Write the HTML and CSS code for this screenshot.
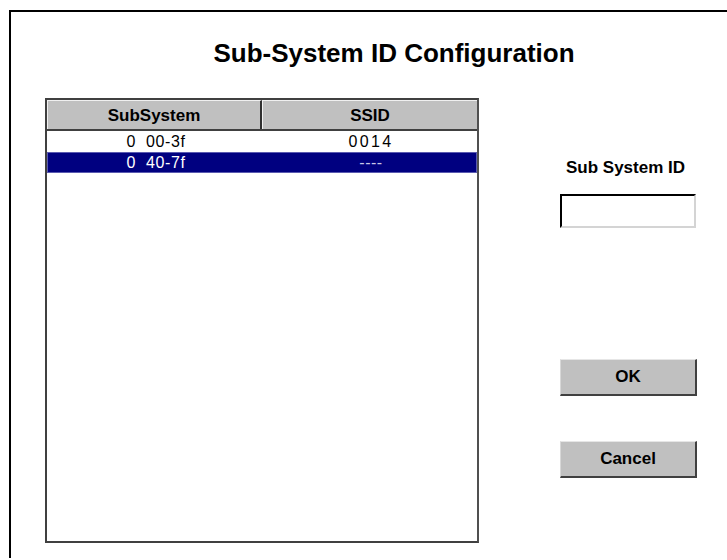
FILE: index.html
```html
<!DOCTYPE html>
<html>
<head>
<meta charset="utf-8">
<link rel="stylesheet" href="styles.css">
</head>
<body>
<div class="frame">
  <h1 class="title">Sub-System ID Configuration</h1>
  <div class="main">
    <div class="list">
      <div class="head">
        <div class="hcell c1">SubSystem</div>
        <div class="hcell c2">SSID</div>
      </div>
      <div class="row">
        <div class="cell c1">0  00-3f</div>
        <div class="cell c2 num">0014</div>
      </div>
      <div class="row sel">
        <div class="cell c1">0  40-7f</div>
        <div class="cell c2 num dash">----</div>
      </div>
    </div>
    <div class="side">
      <div class="label">Sub System ID</div>
      <input class="field" type="text">
      <button class="btn ok">OK</button>
      <button class="btn cancel">Cancel</button>
    </div>
  </div>
</div>
</body>
</html>
```

FILE: styles.css
```css
html, body {
  margin: 0;
  padding: 0;
  background: #fff;
  font-family: "Liberation Sans", Arial, sans-serif;
  color: #000;
}
.frame {
  margin: 10px 0 0 9px;
  border-top: 2px solid #000;
  border-left: 2px solid #000;
  height: 548px;
  box-sizing: border-box;
}
.title {
  margin: 26px 0 0 0;
  padding-left: 50px;
  font-size: 26px;
  line-height: 30px;
  font-weight: bold;
  text-align: center;
}
.main {
  display: flex;
  margin-top: 30px;
  padding-left: 34px;
}
.list {
  width: 434px;
  height: 445px;
  box-sizing: border-box;
  border: 2px solid #404040;
  border-right-color: #505050;
  background: #fff;
  display: flex;
  flex-direction: column;
}
.head {
  display: flex;
  height: 31px;
  box-sizing: border-box;
  border-bottom: 2px solid #404040;
}
.hcell {
  background: #c0c0c0;
  border-top: 1px solid #f0f0f0;
  border-left: 1px solid #f0f0f0;
  font-weight: bold;
  font-size: 17px;
  display: flex;
  align-items: center;
  justify-content: center;
  box-sizing: border-box;
  padding-top: 1px;
}
.hcell.c1 {
  width: 215px;
  border-right: 2px solid #303030;
}
.hcell.c2 {
  flex: 1;
}
.row {
  display: flex;
  height: 21px;
  align-items: center;
  font-size: 16px;
}
.row.sel {
  background: #000080;
  color: #fff;
  outline: 1px solid #5a5ab0;
  outline-offset: -1px;
}
.cell {
  white-space: pre;
  text-align: center;
  letter-spacing: 0.6px;
}
.cell.c1 {
  width: 218px;
}
.cell.c2 {
  flex: 1;
}
.cell.num {
  letter-spacing: 2.4px;
}
.cell.dash {
  color: #c8c8e8;
  letter-spacing: 0.5px;
}
.side {
  margin-left: 81px;
  width: 137px;
  display: flex;
  flex-direction: column;
}
.label {
  margin-top: 61px;
  font-size: 17px;
  line-height: 18px;
  font-weight: bold;
  text-align: center;
  padding-right: 6px;
}
.field {
  margin-top: 17px;
  width: 136px;
  height: 34px;
  box-sizing: border-box;
  border: 2px solid;
  border-color: #000 #d4d4d4 #d4d4d4 #000;
  background: #fff;
  padding: 0 4px;
  font-family: "Liberation Sans", Arial, sans-serif;
  font-size: 15px;
}
.btn {
  width: 137px;
  height: 37px;
  box-sizing: border-box;
  background: #c0c0c0;
  border: 2px solid;
  border-color: #e6e6e6 #404040 #404040 #d8d8d8;
  border-top-width: 1px;
  border-left-width: 1px;
  font-family: "Liberation Sans", Arial, sans-serif;
  font-weight: bold;
  font-size: 17px;
  color: #000;
  padding: 0;
}
.btn.ok {
  margin-top: 131px;
}
.btn.cancel {
  margin-top: 45px;
}
```
